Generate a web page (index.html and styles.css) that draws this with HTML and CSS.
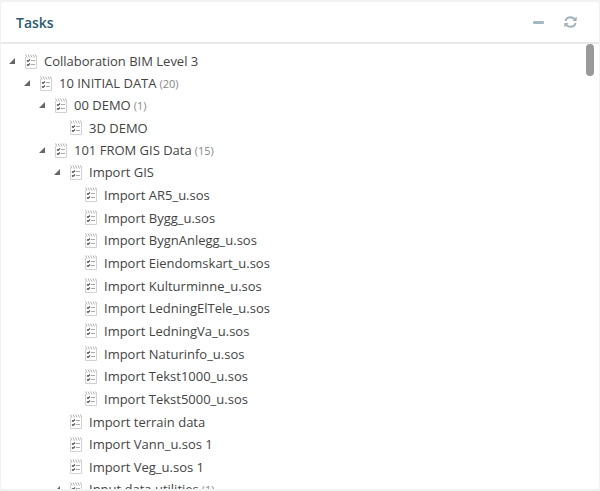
FILE: index.html
```
<!DOCTYPE html>
<html lang="en">
<head>
    <meta charset="UTF-8">
    <meta name="viewport" content="width=device-width, initial-scale=1.0">
    <title>Tasks</title>
    <link rel="stylesheet" href="styles.css">
</head>
<body>
    <!-- Icons shared by the rows -->
    <svg class="sprite" aria-hidden="true">
        <symbol id="icon-task" viewBox="0 0 12 15">
            <path d="M.5 3V14.500H11.500V3" fill="#fff" stroke="#d2d2d2"/>
            <path d="M.5 .5L2 3.500M3 .5L4.500 3.500M5.500 .5L7 3.500M8 .5L9.500 3.500M10.500 .5L11.500 3" fill="none" stroke="#aaa" stroke-width=".9"/>
            <path d="M6 6.500H10M6 10.500H10" stroke="#aaa"/>
            <path d="M2 6.500L3 7.500L5 5.500M2 10.500L3 11.500L5 9.500" fill="none" stroke="#555" stroke-width="1.200"/>
        </symbol>
        <symbol id="icon-arrow" viewBox="0 0 6 6">
            <path d="M6 0V6H0Z" fill="#666"/>
        </symbol>
    </svg>

    <section class="panel">
        <header class="panel-header">
            <h1>Tasks</h1>
            <div class="tools">
                <button type="button" aria-label="Collapse">
                    <svg width="12" height="12" viewBox="0 0 12 12"><rect x="0" y="5" width="11" height="3" rx="1" fill="#a3b7c4"/></svg>
                </button>
                <button type="button" aria-label="Refresh">
                    <svg width="13" height="12" viewBox="0 0 13 12">
                        <path d="M1.500 5C2 2.500 4 1.200 6.500 1.200C8.300 1.200 9.700 2 10.700 3.200M11.500 7C11 9.500 9 10.800 6.500 10.800C4.700 10.800 3.300 10 2.300 8.800" fill="none" stroke="#a3b3be" stroke-width="1.900"/>
                        <path d="M12.700 .5V5H8.200ZM.3 11.500V7H4.800Z" fill="#a3b3be"/>
                    </svg>
                </button>
            </div>
        </header>
        <div class="panel-body">
            <ul class="tree" id="tree"></ul>
            <div class="scroll-thumb"></div>
        </div>
    </section>

    <script src="tree.js"></script>
</body>
</html>
```

FILE: styles.css
```
* {
    box-sizing: border-box;
}
body {
    display: flex;
    height: 100vh;
    margin: 0;
    padding: 2px 1px;
    background-color: #f1f2f2;
    font-family: "Open Sans", sans-serif;
    font-size: 13px;
    color: #444;
}
.sprite {
    display: none;
}
.panel {
    display: flex;
    flex-direction: column;
    flex: 1;
    min-width: 0;
    background-color: #fff;
    border-radius: 3px;
    overflow: hidden;
}
.panel-header {
    display: flex;
    align-items: center;
    justify-content: space-between;
    flex: none;
    height: 42px;
    padding: 0 22px 0 15px;
    border-bottom: 2px solid #e8e9ea;
}
.panel-header h1 {
    margin: 0;
    font-size: 14px;
    font-weight: 600;
    color: #2b5a73;
}
.tools {
    display: flex;
    gap: 19px;
}
button {
    display: flex;
    padding: 0;
    border: none;
    background: none;
    cursor: pointer;
}
.panel-body {
    position: relative;
    flex: 1;
    min-height: 0;
    overflow: hidden;
}
.tree,
.tree ul {
    margin: 0;
    padding: 0;
    list-style: none;
}
.tree {
    padding: 6px 16px 0 8px;
}
.tree ul {
    padding-left: 15px;
}
.row {
    display: flex;
    align-items: center;
    height: 23px;
    white-space: nowrap;
}
.row.branch,
.tree li:nth-child(3n) > .row {
    height: 22px;
}
.toggle {
    width: 16px;
    flex: none;
}
.toggle svg {
    width: 6px;
    height: 6px;
}
.task-icon {
    flex: none;
    width: 12px;
    height: 15px;
    margin-right: 7px;
}
.count {
    margin-left: 3px;
    font-size: 11px;
    color: #888;
}
/* scrollbar */
.scroll-thumb {
    position: absolute;
    top: 0;
    right: 5px;
    width: 8px;
    height: 32px;
    border-radius: 4px;
    background-color: #999;
}
```

FILE: tree.js
```
const tasks = [
    { name: "Collaboration BIM Level 3", children: [
        { name: "10 INITIAL DATA", count: 20, children: [
            { name: "00 DEMO", count: 1, children: [
                { name: "3D DEMO" }
            ] },
            { name: "101 FROM GIS Data", count: 15, children: [
                { name: "Import GIS", children: [
                    { name: "Import AR5_u.sos" },
                    { name: "Import Bygg_u.sos" },
                    { name: "Import BygnAnlegg_u.sos" },
                    { name: "Import Eiendomskart_u.sos" },
                    { name: "Import Kulturminne_u.sos" },
                    { name: "Import LedningElTele_u.sos" },
                    { name: "Import LedningVa_u.sos" },
                    { name: "Import Naturinfo_u.sos" },
                    { name: "Import Tekst1000_u.sos" },
                    { name: "Import Tekst5000_u.sos" }
                ] },
                { name: "Import terrain data" },
                { name: "Import Vann_u.sos 1" },
                { name: "Import Veg_u.sos 1" },
                { name: "Input data utilities", count: 1, children: [] }
            ] }
        ] }
    ] }
];

function renderTask(task) {
    const arrow = task.children
        ? `<button type="button" class="toggle" aria-label="Toggle ${task.name}"><svg><use href="#icon-arrow"/></svg></button>`
        : `<span class="toggle"></span>`;
    const count = task.count ? `<span class="count">(${task.count})</span>` : "";
    const children = task.children && task.children.length
        ? `<ul>${task.children.map(renderTask).join("")}</ul>`
        : "";
    return `
        <li>
            <div class="row ${task.children ? "branch" : ""}">
                ${arrow}
                <svg class="task-icon"><use href="#icon-task"/></svg>
                <span>${task.name}</span>${count}
            </div>
            ${children}
        </li>
    `;
}

const tree = document.getElementById("tree");
tree.innerHTML = tasks.map(renderTask).join("");

tree.addEventListener("click", (e) => {
    const button = e.target.closest("button");
    if (!button) return;
    const list = button.closest("li").querySelector("ul");
    if (list) list.hidden = !list.hidden;
});
```
